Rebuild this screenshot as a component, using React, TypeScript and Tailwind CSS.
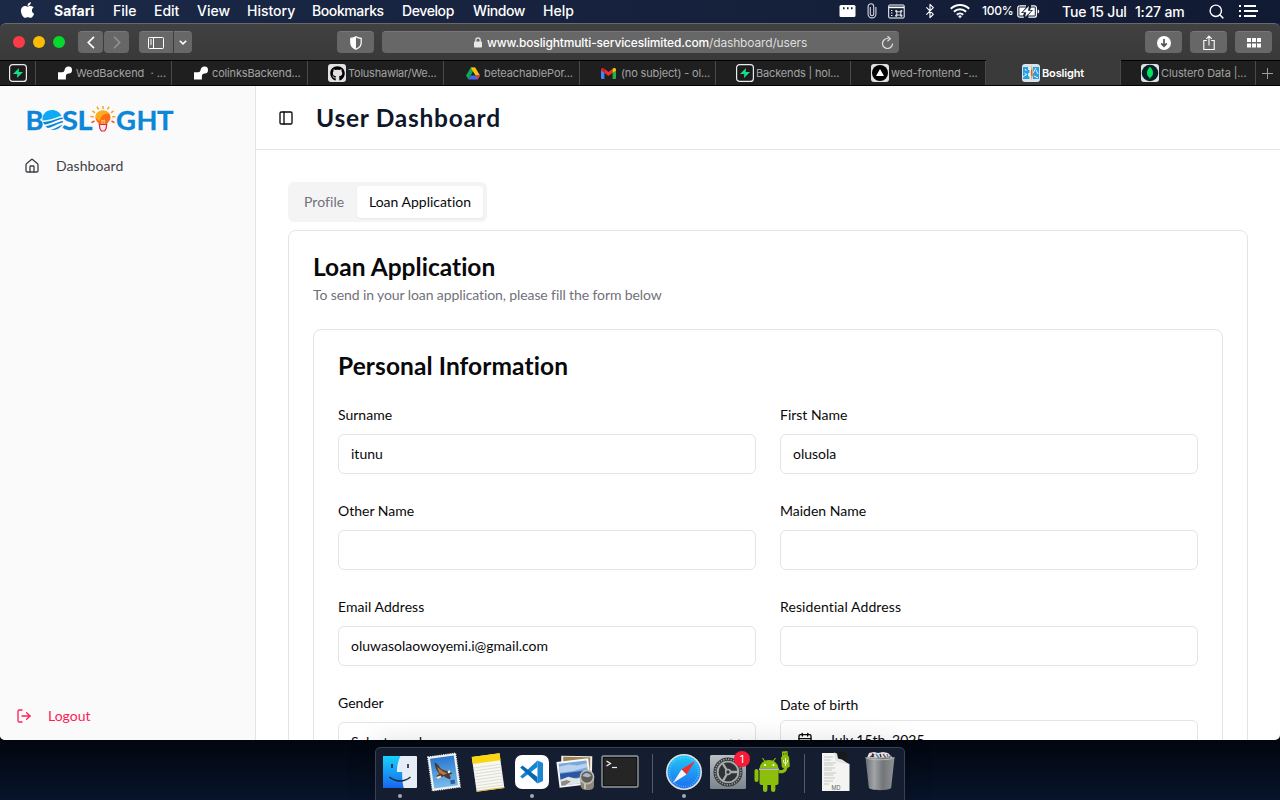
import React from "react";
import {
  Bluetooth,
  Calendar,
  ChevronDown,
  House,
  LogOut,
  PanelLeft,
  Search,
} from "lucide-react";
import { FaApple, FaGithub } from "react-icons/fa";

const menus = [
  { label: "Safari", cls: "w-[59px] font-bold" },
  { label: "File", cls: "w-[41px]" },
  { label: "Edit", cls: "w-[43px]" },
  { label: "View", cls: "w-[50px]" },
  { label: "History", cls: "w-[65px]" },
  { label: "Bookmarks", cls: "w-[90px] tracking-[-0.4px]" },
  { label: "Develop", cls: "w-[71px] tracking-[-0.4px]" },
  { label: "Window", cls: "w-[70px] tracking-[-0.4px]" },
  { label: "Help", cls: "w-[40px]" },
];

function MenuBar() {
  return (
    <div className="flex h-[23px] shrink-0 items-center bg-gradient-to-r from-[#1b2947] to-[#111a33] text-[14px] font-medium text-white">
      <div className="flex w-[54px] items-center pl-[20px]">
        <FaApple className="-mt-[3px] h-[18px] w-[15px]" />
      </div>
      {menus.map((m) => (
        <span key={m.label} className={`-mt-px shrink-0 whitespace-nowrap leading-[22px] ${m.cls}`}>
          {m.label}
        </span>
      ))}
      <div className="ml-auto flex h-full items-center pb-px">
        <svg className="mr-[11px]" width="18" height="14" viewBox="0 0 18 14">
          <rect x="1.5" y="1" width="16" height="12" rx="1.5" fill="#fff" />
          <path d="M5 3.2h1.6v2H5zM9 3.2h1.6v2H9zM13 3.2h1.6v2H13z" fill="#17223f" />
        </svg>
        <svg className="mr-[11px]" width="10" height="16" viewBox="0 0 10 16" fill="none" stroke="#d5d8df" strokeWidth="1.1">
          <path d="M3.3 4v7a1.7 1.7 0 0 0 3.4 0V3.5a2.8 2.8 0 0 0-5.6 0V11a3.9 3.9 0 0 0 7.8 0V4" />
        </svg>
        <svg className="mr-[17px]" width="17" height="15" viewBox="0 0 17 15" fill="none" stroke="#fff">
          <rect x="0.7" y="1" width="15.5" height="13" rx="1" />
          <path d="M1 3.4h15" strokeWidth="1.6" />
          <path d="M3 6.5h2M3 9h2M3 11.5h2" strokeWidth="1.2" strokeDasharray="1 .6" />
          <path d="M8.8 7.8h4v3.2h-4zM8.8 7.8H7.7V6.5h1.1zM12.8 7.8h1.1V6.5h-1.1zM8.8 11H7.7v1.3h1.1zM12.8 11h1.1v1.3h-1.1z" strokeWidth=".9" />
        </svg>
        <Bluetooth className="mr-[12px] h-[18px] w-[16px]" strokeWidth={1.7} />
        <svg className="mr-[12px]" width="20" height="16" viewBox="0 0 20 16" fill="none" stroke="#fff" strokeWidth="2">
          <path d="M.8 5.7a13 13 0 0 1 18.4 0M3.9 8.8a8.6 8.6 0 0 1 12.2 0M6.8 11.7a4.6 4.6 0 0 1 6.4 0" />
          <path d="M10 15.2l-1.9-2a2.7 2.7 0 0 1 3.8 0z" fill="#fff" stroke="none" />
        </svg>
        <span className="w-[35px] whitespace-nowrap text-[12px] tracking-[-0.25px]">100%</span>
        <svg className="mr-[22px]" width="23" height="13" viewBox="0 0 23 13">
          <path d="M3 .8h6M2.8.8A2 2 0 0 0 .8 2.8v7.4a2 2 0 0 0 2 2h4M14 .8h3.4a2 2 0 0 1 2 2v7.4a2 2 0 0 1-2 2h-6" fill="none" stroke="#fff" strokeWidth="1.2" />
          <path d="M2.4 2.4H9L4 8h3l-1 2.6H2.4zM17.8 10.6H11L16 5h-3l1-2.6h3.8z" fill="#fff" />
          <path d="M12 1L5.6 7.2h3.7L8 12l6.6-6.2H11z" fill="#fff" />
          <path d="M20.7 4.5c2 .6 2 3.4 0 4z" fill="#fff" />
        </svg>
        <span className="w-[73px] whitespace-nowrap tracking-[-0.2px]">Tue 15 Jul</span>
        <span className="w-[73px] whitespace-nowrap tracking-[-0.2px]">1:27 am</span>
        <Search className="mr-[14px] h-[17px] w-[17px]" strokeWidth={2} />
        <svg className="mr-[22px]" width="19" height="12" viewBox="0 0 19 12" stroke="#fff" strokeWidth="2" shapeRendering="crispEdges">
          <path d="M0 1h2M0 6h2M0 11h2M5 1h12M5 6h14M5 11h12" />
        </svg>
      </div>
    </div>
  );
}

const btn = "flex h-[22px] shrink-0 items-center justify-center bg-[#676767] text-white border-t border-[#777777]";

function Toolbar() {
  return (
    <div className="flex h-[37px] shrink-0 items-center rounded-t-[6px] border-t border-[#686868] bg-gradient-to-b from-[#414141] to-[#393939]">
      <div className="ml-[13px] flex gap-[8px]">
        <div className="h-[12px] w-[12px] rounded-full bg-[#fc3b47]" />
        <div className="h-[12px] w-[12px] rounded-full bg-[#fdbc04]" />
        <div className="h-[12px] w-[12px] rounded-full bg-[#05d92d]" />
      </div>
      <div className={`${btn} ml-[13px] w-[25px] rounded-[4px]`}>
        <svg width="8" height="13" viewBox="0 0 8 13" fill="none" stroke="#fff" strokeWidth="1.7">
          <path d="M7 .8L1.3 6.5 7 12.2" />
        </svg>
      </div>
      <div className={`${btn} ml-px w-[25px] rounded-[4px]`}>
        <svg width="8" height="13" viewBox="0 0 8 13" fill="none" stroke="#949494" strokeWidth="1.5">
          <path d="M1 .8l5.7 5.7L1 12.2" />
        </svg>
      </div>
      <div className={`${btn} ml-[10px] w-[34px] rounded-l-[4px]`}>
        <svg width="16" height="12" viewBox="0 0 16 12" fill="none" stroke="#fff">
          <rect x=".5" y=".5" width="15" height="11" rx=".8" />
          <path d="M5.5.5v11M2 3h2M2 5h2M2 7h2" />
        </svg>
      </div>
      <div className={`${btn} ml-px w-[18px] rounded-r-[4px]`}>
        <svg width="8" height="5" viewBox="0 0 8 5" fill="none" stroke="#fff" strokeWidth="1.6">
          <path d="M.8.8L4 3.9 7.2.8" />
        </svg>
      </div>
      <div className={`${btn} ml-[145px] w-[37px] rounded-[4px]`}>
        <svg width="12" height="14" viewBox="0 0 12 14">
          <path d="M6 .7c1.4 1 3.2 1.6 5.2 1.7v4.4c0 3-2 5.2-5.2 6.5C2.8 12 .8 9.8.8 6.8V2.4C2.8 2.3 4.6 1.7 6 .7z" fill="none" stroke="#fff" strokeWidth="1.2" />
          <path d="M6 .7v12.6C2.8 12 .8 9.8.8 6.8V2.4C2.8 2.3 4.6 1.7 6 .7z" fill="#fff" />
        </svg>
      </div>
      <div className={`${btn} ml-[8px] w-[517px] rounded-[4px] text-[12px]`}>
        <div className="flex w-full items-center">
          <svg className="ml-[92px] mr-[5px]" width="8" height="11" viewBox="0 0 8 11">
            <rect x="0" y="4.5" width="8" height="6" rx=".8" fill="#e8e8e8" />
            <path d="M1.8 5V3a2.2 2.2 0 0 1 4.4 0v2" fill="none" stroke="#e8e8e8" strokeWidth="1.2" />
          </svg>
          <span className="w-[390px] whitespace-nowrap font-medium leading-[20px] tracking-[-0.15px]">
            www.boslightmulti-serviceslimited.com<span className="font-normal text-[#dedede]">/dashboard/users</span>
          </span>
          <svg className="ml-auto mr-[5px]" width="13" height="14" viewBox="0 0 13 14" fill="none" stroke="#e0e0e0" strokeWidth="1.2">
            <path d="M11.5 7.5a5 5 0 1 1-5-5h1" />
            <path d="M6.5.2l2.8 2.5-2.8 2.5" />
          </svg>
        </div>
      </div>
      <div className={`${btn} ml-auto w-[37px] rounded-[4px]`}>
        <svg width="14" height="14" viewBox="0 0 14 14">
          <circle cx="7" cy="7" r="7" fill="#fff" />
          <path d="M7 3v7M4.2 7.4L7 10.2l2.8-2.8" stroke="#555" strokeWidth="1.7" fill="none" />
        </svg>
      </div>
      <div className={`${btn} ml-[8px] w-[37px] rounded-[4px]`}>
        <svg width="12" height="16" viewBox="0 0 12 16" fill="none" stroke="#fff" strokeWidth="1.1">
          <path d="M3.8 5.5H.8v9h10.4v-9h-3M6 10.5V1.2M3.3 3.8L6 1.1l2.7 2.7" />
        </svg>
      </div>
      <div className={`${btn} ml-[8px] mr-[8px] w-[37px] rounded-[4px]`}>
        <svg width="14" height="10" viewBox="0 0 14 10" fill="#fff">
          <path d="M0 0h4v4H0zM5 0h4v4H5zM10 0h4v4h-4zM0 5.5h4v4H0zM5 5.5h4v4H5zM10 5.5h4v4h-4z" />
        </svg>
      </div>
    </div>
  );
}

function Supabase() {
  return (
    <svg width="18" height="18" viewBox="0 0 18 18">
      <rect x=".6" y=".6" width="16.8" height="16.8" rx="3" fill="#1c1c1c" stroke="#ececec" strokeWidth="1.2" />
      <path d="M10 4L4 10h4.3l-.3 4L14 8H9.7z" fill="#14e08a" />
    </svg>
  );
}
function Render() {
  return (
    <svg width="14" height="14" viewBox="0 0 14 14" fill="#fff">
      <path d="M0 6.2h4.2c1.4 0 1.8-.6 2.2-1.7C7 2 8.2.5 10.3.5a3.5 3.5 0 0 1 .4 7c-1.8.1-2.7.8-2.8 2.6v3.4H0z" />
    </svg>
  );
}
function Drive() {
  return (
    <svg width="14" height="13" viewBox="0 0 14 13">
      <path d="M4.8.5h4.4l-2.2 4L2.4 12.5 0 8.6z" fill="#11a84f" />
      <path d="M4.8.5h4.4L14 8.6H9.5z" fill="#ffc107" />
      <path d="M4.7 8.6H14l-2.4 3.9H2.4z" fill="#4169f0" />
      <path d="M9.6 8.6H14l-2.4 3.9z" fill="#ef3a32" />
    </svg>
  );
}
function Gmail() {
  return (
    <svg width="15" height="11" viewBox="0 0 15 11">
      <path d="M0 1.5l3.4 2.6V11H1a1 1 0 0 1-1-1z" fill="#4285f4" />
      <path d="M15 1.5l-3.4 2.6V11H14a1 1 0 0 0 1-1z" fill="#22b24c" />
      <path d="M3.4.7l4.1 3.2 4.1-3.2v4.1L7.5 8 3.4 4.8z" fill="#ee3124" />
      <path d="M0 1.8C0 .2 1.7-.5 3.4.7v4.1L0 2.4z" fill="#d92020" />
      <path d="M15 1.8c0-1.6-1.7-2.3-3.4-1.1v4.1L15 2.4z" fill="#fbc60a" />
    </svg>
  );
}
function Vercel() {
  return (
    <svg width="18" height="18" viewBox="0 0 18 18">
      <rect width="18" height="18" rx="3" fill="#e2e2e2" />
      <circle cx="9" cy="9" r="8" fill="#000" />
      <path d="M9 5l4 7H5z" fill="#fff" />
    </svg>
  );
}
function BosIcon() {
  return (
    <svg width="18" height="18" viewBox="0 0 18 18">
      <rect width="18" height="18" rx="3" fill="#dce4ea" />
      <path d="M1 3h5v3h2v3H6v3l2 1v2H1zM11 3h6v12h-6z" fill="#25a0e6" />
      <path d="M3 5l1.5 2M2.5 9l2.5 2M1 13l4-3M14 4l-3 5M14 6l2 4M12 12l4 2M8 3v12" stroke="#eef6fb" strokeWidth="1" />
      <path d="M9.500 1l1.300 5-.4 8-1 2-.8-6z" fill="#f4a52c" />
      <path d="M9.500 6l.5 6" stroke="#e5502e" />
    </svg>
  );
}
function Mongo() {
  return (
    <svg width="18" height="18" viewBox="0 0 18 18">
      <rect width="18" height="18" rx="3" fill="#dfe3e3" />
      <circle cx="9" cy="9" r="8.3" fill="#06202c" />
      <path d="M9 2.800c2 2 3 4 3 6.200 0 2-1 3.600-2.600 4.700L9 15.300l-.4-1.600C7 12.600 6 11 6 9c0-2.200 1-4.200 3-6.200z" fill="#00e55a" />
    </svg>
  );
}

const tabs = [
  { name: "WedBackend  · ...", cls: "w-[136px] pl-[22px] gap-[4px]", icon: <Render />, text: "tracking-[-0.02px]" },
  { name: "colinksBackend...", cls: "w-[136px] pl-[22px] gap-[4px]", icon: <Render />, text: "tracking-[-0.15px]" },
  {
    name: "Tolushawlar/We...",
    cls: "w-[136px] pl-[20px] gap-[2px]",
    icon: (
      <span className="flex h-[18px] w-[18px] items-center justify-center rounded-[3px] bg-[#e2e2e2] text-black">
        <FaGithub className="h-[15px] w-[15px]" />
      </span>
    ),
    text: "tracking-[-0.23px]",
  },
  { name: "beteachablePor...", cls: "w-[136px] pl-[22px] gap-[4px]", icon: <Drive />, text: "tracking-[-0.1px]" },
  { name: "(no subject) - ol...", cls: "w-[136px] pl-[21px] gap-[5px]", icon: <Gmail />, text: "tracking-[-0.16px]" },
  { name: "Backends | hol...", cls: "w-[135px] pl-[20px] gap-[2px]", icon: <Supabase />, text: "tracking-[-0.16px]" },
  { name: "wed-frontend -...", cls: "w-[135px] pl-[20px] gap-[2px]", icon: <Vercel />, text: "tracking-[-0.14px]" },
  { name: "Boslight", cls: "w-[135px] pl-[36px] gap-[2px]", icon: <BosIcon />, text: "tracking-[-0.15px]", active: true },
  { name: "Cluster0 Data |...", cls: "w-[135px] pl-[20px] gap-[2px]", icon: <Mongo />, text: "tracking-[-0.1px]" },
];

function TabStrip() {
  return (
    <div className="flex h-[26px] shrink-0 border-b border-t border-black bg-[#1f1f1f] text-[11px]">
      <div className="flex w-[36px] shrink-0 items-center border-r border-[#4a4a4a] pl-[9px]">
        <Supabase />
      </div>
      {tabs.map((t) => (
        <div
          key={t.name}
          className={`flex shrink-0 items-center overflow-hidden border-r border-[#4a4a4a] ${t.cls} ${t.active ? "-mt-px bg-[#3a3a3a] pt-px font-semibold text-white" : "text-[#a3a3a3]"}`}
        >
          <span className="shrink-0">{t.icon}</span>
          <span className={`whitespace-pre ${t.text}`}>{t.name}</span>
        </div>
      ))}
      <div className="flex flex-1 items-center justify-center pr-px">
        <svg width="11" height="11" viewBox="0 0 11 11" stroke="#9b9b9b">
          <path d="M5.5 0v11M0 5.5h11" />
        </svg>
      </div>
    </div>
  );
}

function Logo() {
  return (
    <svg className="overflow-visible" width="150" height="30" viewBox="0 0 150 30">
      <g fill="#0b86d8" fontFamily="Lato, sans-serif" fontWeight="700" fontSize="27" stroke="#0b86d8" strokeWidth=".3">
        <text x="-.5" y="24.5" textLength="18" lengthAdjust="spacingAndGlyphs">B</text>
        <text x="36" y="24.5" textLength="16" lengthAdjust="spacingAndGlyphs">S</text>
        <text x="51.5" y="24.5" textLength="15" lengthAdjust="spacingAndGlyphs">L</text>
        <text x="90" y="24.500" textLength="20" lengthAdjust="spacingAndGlyphs">G</text>
        <text x="110.500" y="24.500" textLength="21" lengthAdjust="spacingAndGlyphs">H</text>
        <text x="131" y="24.500" textLength="16.500" lengthAdjust="spacingAndGlyphs">T</text>
      </g>
      <path d="M16.500 15.500C16 9 20.500 5 26 5c4.500 0 8 2.500 9.500 6C31 11.500 25 15.500 16.500 15.500z" fill="#10a9f4" />
      <path d="M17 17c8 0 13.500-4 19.500-4.500l.3 1.500C31 14.500 25 19 18.300 19.500zM19.500 21c7-.5 12-4.500 17.500-5l-.2 1.500C31 18.500 27 22.500 21.500 23zM24 24.800c5-.5 8.500-4 12.500-5-2 3-5.300 5.200-9 5.200z" fill="#0b86d8" />
      <g stroke="#f9a51a" strokeWidth="1.500">
        <path d="M77 4V1M72.500 4.500l-1.500-2.800M81.500 4.500L83 1.700M69 7.800l-2.600-2M85 7.800l2.600-2M67.800 12l-3.300-.5M86.200 12l3.300-.5" />
        <path d="M68.500 16l-3 1.700M85.500 16l3 1.700" stroke="#ee4b2b" />
      </g>
      <path d="M77 5.500c4.400 0 7.500 3.100 7.500 7 0 3.500-3 4.700-3.800 7.500h-7.400c-.8-2.800-3.800-4-3.800-7.500 0-3.900 3.100-7 7.500-7z" fill="#fb6d13" />
      <path d="M77 5.500c3 0 5 1.500 6 3.500-4-1-8 1-9.500 7C71 14.500 69.500 13 69.500 11c.5-3.300 4-5.500 7.500-5.500z" fill="#fcbb20" opacity=".8" />
      <path d="M75 15l2 1 2-1M76 20v-4.500M78.200 20v-4.500" stroke="#ffe2a5" strokeWidth=".8" fill="none" />
      <path d="M73.300 19.500h7.400l-.6 4-1.500 2.500h-3.200L73.900 23.500z" fill="#f9e9e9" stroke="#e2263c" strokeWidth="1.200" />
    </svg>
  );
}

function Field({ label, value, text }: { label: string; value?: string; text?: string }) {
  return (
    <div>
      <div className={`h-6 text-sm leading-[26px] ${text ?? ""}`}>{label}</div>
      <div className="mt-2 flex h-10 items-center rounded-md border border-[#e4e4e7] px-3 text-sm">{value}</div>
    </div>
  );
}

function Page() {
  return (
    <div className="flex min-h-0 flex-1 overflow-hidden rounded-b-[5px] bg-white font-['Lato',sans-serif] text-[#09090b] [font-variant-ligatures:none]">
      <aside className="flex w-64 shrink-0 flex-col border-r border-[#e4e4e7] bg-[#fafafa] text-sm">
        <div className="h-[49px] pl-[26px] pt-[19px]">
          <Logo />
        </div>
        <div className="mt-[21px] flex items-center gap-4 pl-6 text-[#3f3f46]">
          <House className="h-4 w-4" />
          <span className="tracking-[0.08px]">Dashboard</span>
        </div>
        <div className="mb-[14px] mt-auto flex items-center gap-4 pl-4 text-[#ff2056]">
          <LogOut className="h-4 w-4" />
          <span>Logout</span>
        </div>
      </aside>
      <main className="flex flex-1 flex-col overflow-hidden">
        <header className="flex h-16 shrink-0 items-center border-b border-[#e4e4e7] pl-[22px]">
          <PanelLeft className="h-4 w-4" />
          <h1 className="ml-[22px] text-[24.5px] font-bold leading-8 tracking-[0.73px] text-[#0f172a]">User Dashboard</h1>
        </header>
        <div className="flex flex-col items-start px-8 pt-8">
          <div className="flex h-10 shrink-0 items-center rounded-md bg-[#f4f4f5] p-1 text-sm">
            <span className="w-[65px] px-3 py-1.5 tracking-[0.05px] text-[#71717a] [font-variant-ligatures:normal]">Profile</span>
            <span className="w-[126px] whitespace-nowrap rounded-sm bg-white px-3 py-1.5 shadow-[0_1px_2px_rgba(0,0,0,0.06)]">Loan Application</span>
          </div>
          <section className="mt-2 w-full rounded-lg border border-[#e4e4e7] p-6">
            <h2 className="text-[24.5px] font-bold leading-[24px] tracking-[0.02px]">Loan Application</h2>
            <p className="mt-1.5 text-sm tracking-[-0.1px] text-[#71717a]">To send in your loan application, please fill the form below</p>
            <div className="mt-6 rounded-lg border border-[#e4e4e7] p-6">
              <h3 className="text-[24.5px] font-bold leading-[24px] tracking-[0.09px]">Personal Information</h3>
              <div className="mt-6 grid grid-cols-2 gap-6">
                <Field label="Surname" value="itunu" />
                <Field label="First Name" value="olusola" />
                <Field label="Other Name" />
                <Field label="Maiden Name" />
                <Field label="Email Address" value="oluwasolaowoyemi.i@gmail.com" text="tracking-[0.07px]" />
                <Field label="Residential Address" text="tracking-[0.1px]" />
                <div>
                  <div className="h-6 text-sm leading-[26px]">Gender</div>
                  <div className="mt-2 flex h-10 items-center justify-between rounded-md border border-[#e4e4e7] px-3 text-sm">
                    <span>Select gender</span>
                    <ChevronDown className="h-4 w-4 opacity-50" />
                  </div>
                </div>
                <div className="pt-2">
                  <div className="text-sm leading-[14px]">Date of birth</div>
                  <div className="mt-2 flex h-10 items-center gap-4 rounded-md border border-[#e4e4e7] px-4 text-sm">
                    <Calendar className="h-4 w-4" />
                    <span>July 15th, 2025</span>
                  </div>
                </div>
              </div>
            </div>
          </section>
        </div>
      </main>
    </div>
  );
}

function DockIcon({ children, running }: { children: React.ReactNode; running?: boolean }) {
  return (
    <svg className="shrink-0" width="44" height="52" viewBox="0 0 44 52">
      {children}
      {running && <circle cx="22" cy="48" r="2" fill="#a4a8b4" />}
    </svg>
  );
}

function Dock() {
  return (
    <div className="absolute left-[375px] top-[747px] flex h-[60px] w-[530px] rounded-t-[5px] border border-[#3a4153] bg-[#151d31] pl-[2px] shadow-[0_0_30px_rgba(0,0,0,0.2)]">
      <svg className="absolute" width="0" height="0">
        <defs>
          <linearGradient id="finder" x2="0" y2="1"><stop stopColor="#18d1fb" /><stop offset="1" stopColor="#1766ef" /></linearGradient>
          <linearGradient id="safari" x2="0" y2="1"><stop stopColor="#20c9f7" /><stop offset="1" stopColor="#1c6df0" /></linearGradient>
          <linearGradient id="metal" x2="0" y2="1"><stop stopColor="#b9c0c4" /><stop offset="1" stopColor="#7c858d" /></linearGradient>
          <linearGradient id="bin"><stop stopColor="#6b6e70" /><stop offset=".3" stopColor="#a2a5a7" /><stop offset=".6" stopColor="#737678" /><stop offset="1" stopColor="#909395" /></linearGradient>
          <linearGradient id="sky" x2="0" y2="1"><stop stopColor="#2a78ce" /><stop offset="1" stopColor="#79bbed" /></linearGradient>
        </defs>
      </svg>
      <DockIcon running>
        <rect x="5" y="8" width="34" height="32" rx="1" fill="#e7edf6" />
        <path d="M5 8h17.500c-2.500 5-3.500 10-3.600 16h5.300c-.2 6 .3 11 1.500 16H5z" fill="url(#finder)" />
        <path d="M14 16v4M30 16v4" stroke="#17253b" strokeWidth="1.6" />
        <path d="M11.5 29c6 5.300 15 5.300 21 0" fill="none" stroke="#17253b" strokeWidth="1.5" />
      </DockIcon>
      <DockIcon>
        <g transform="rotate(-8 22 24)">
          <rect x="8" y="7" width="28" height="34" fill="#f1f2f2" stroke="#f1f2f2" strokeWidth="1.4" strokeDasharray="1.2 1" />
          <rect x="10" y="9" width="24" height="30" fill="url(#sky)" />
          <path d="M14 13c2.500 1 4 5 6 8l4 2c3 .5 5 2 6 4l-3 .5c.8 2 1 3.500.3 4.500-3-1-4-2-6-4l-4 1.500-4-.5 1-2.500 3-1c-2.500-4-4-8-3.300-12.500z" fill="#4c3b31" />
          <path d="M16 18l5 5 4 3-4 1-4-3z" fill="#b87735" />
          <circle cx="27" cy="24.5" r="1.4" fill="#f5f2e6" />
          <path d="M13 28l5-1 1 2-4 1z" fill="#ece2c8" />
          <rect x="27" y="33" width="4.5" height="4" fill="#2d5f9e" />
        </g>
      </DockIcon>
      <DockIcon>
        <g transform="rotate(-8 22 24)">
          <rect x="8" y="7" width="28" height="35" fill="#f8f8f3" />
          <rect x="8" y="7" width="28" height="7" fill="#fbd510" />
          <path d="M8 18h28M8 21h28M8 24h28M8 27h28M8 30h28M8 33h28M8 36h28M8 39h28" stroke="#d2d3ce" strokeWidth=".7" />
          <path d="M8 41.5h28" stroke="#d8b62d" />
        </g>
      </DockIcon>
      <DockIcon running>
        <rect x="5" y="7" width="34" height="34" rx="7" fill="#fff" />
        <path d="M27.500 12.500v6.500L12.500 30.500l-2.300-2.100z" fill="#1685d3" />
        <path d="M27.500 35.500V29L12.500 17.500l-2.300 2.100z" fill="#0869b5" />
        <path d="M27.500 12.500l5.500 2.600v17.800l-5.500 2.600z" fill="#1b86d2" />
      </DockIcon>
      <DockIcon>
        <g transform="rotate(1 22 24)"><rect x="7" y="8" width="31" height="24" fill="#efefe9" /><rect x="9" y="9" width="27" height="20" fill="#a18254" /></g>
        <g transform="rotate(-7 20 26)">
          <rect x="4" y="12" width="32" height="26" fill="#f6f7f6" />
          <rect x="6" y="14" width="28" height="22" fill="#79a8dc" />
          <path d="M6 17l10-1 8 2 10-1v4l-14 2-14 0z" fill="#b9d2ef" />
          <path d="M6 24h28v6H6z" fill="#2c56a0" />
          <path d="M6 30l8-2 8 3 12-2v7H6z" fill="#dfe4e4" />
          <path d="M6 32l6-1 4 2-6 3H6z" fill="#8f8a83" />
        </g>
        <path d="M26.500 30h13.500v7c0 4-2 5-6.500 5s-6.500-1-7-5z" fill="#8d867b" />
        <path d="M30 36h2v5h-2z" fill="#c5bfb4" />
        <circle cx="33" cy="29" r="6.600" fill="#635c50" stroke="#babbb8" strokeWidth="1.600" />
        <path d="M28.500 28c2-4 6-4 9 0-2 0-3 2-5 1-2 0-3-1-4-1z" fill="#a5b9cf" />
      </DockIcon>
      <DockIcon>
        <rect x="4" y="8" width="36" height="31" rx="1.5" fill="#242524" stroke="#8f9899" strokeWidth="1.4" />
        <rect x="5.5" y="9.5" width="33" height="28" fill="none" stroke="#121414" />
        <path d="M8.500 13l4 2.500-4 2.500" fill="none" stroke="#eee" strokeWidth="1.3" />
        <path d="M14 19.5h5" stroke="#eee" strokeWidth="1.2" />
      </DockIcon>
      <div className="flex w-[20px] shrink-0 justify-center pt-[6px]"><div className="h-[39px] w-px bg-[#525a6b]" /></div>
      <DockIcon running>
        <circle cx="22" cy="24" r="18" fill="#dfe2e3" />
        <circle cx="22" cy="24" r="16.4" fill="url(#safari)" />
        <circle cx="22" cy="24" r="14.6" fill="none" stroke="#8adcf8" strokeWidth="1.6" strokeDasharray=".5 1.8" />
        <path d="M33 13L24.500 26.500 19.500 21.500z" fill="#f12e2d" />
        <path d="M11 35l8.500-13.500 5 5z" fill="#f5f5f5" />
      </DockIcon>
      <DockIcon>
        <rect x="4" y="7" width="36" height="34" rx="1.5" fill="url(#metal)" />
        <circle cx="22" cy="24" r="14.5" fill="#303335" />
        <circle cx="22" cy="24" r="12.8" fill="none" stroke="#8f9395" strokeWidth="1.7" strokeDasharray="1.4 1.1" />
        <circle cx="22" cy="24" r="10.4" fill="#303335" stroke="#a7aaac" strokeWidth="1.9" />
        <path d="M22 24l-5-8M22 24h10M22 24l-5 9" stroke="#a9acad" strokeWidth="2.3" />
        <circle cx="22" cy="24" r="2.4" fill="#303335" stroke="#a9acad" strokeWidth="1.5" />
        <circle cx="36" cy="11" r="8" fill="#f71b35" />
        <text x="36" y="14.7" textAnchor="middle" fill="#fff" fontSize="10.5" fontFamily="Inter, sans-serif">1</text>
      </DockIcon>
      <DockIcon>
        <g fill="#8dbe0c">
          <path d="M9.500 20.500a9.500 8.500 0 0 1 19 0z" />
          <path d="M9.500 22h19v13a2 2 0 0 1-2 2h-15a2 2 0 0 1-2-2z" />
          <rect x="4.500" y="21" width="4" height="13" rx="2" />
          <rect x="13" y="32" width="4.400" height="12" rx="2.200" />
          <rect x="21" y="32" width="4.400" height="12" rx="2.200" />
          <path d="M28.500 22h3c2 0 2.500-1.500 2.500-4h3.500c0 5-2.500 7.300-6 7.300h-3z" />
          <path d="M31 9l8-.7.8 10c-.3 2-7.500 2.500-8 .7z" />
          <path d="M32 3.500l5.500-.5.5 6-6 .5z" />
        </g>
        <path d="M12.500 10l2.700 4M25.500 10l-2.700 4" stroke="#8dbe0c" strokeWidth="1.1" />
        <path d="M9 21.200h20" stroke="#d8ddd0" strokeWidth="1.3" />
        <circle cx="15" cy="17" r="1" fill="#fff" /><circle cx="23.5" cy="17" r="1" fill="#fff" />
        <path d="M33.700 5v2M36 4.800v2" stroke="#47620c" strokeWidth="1" />
        <path d="M35.500 10v8M33.500 12v2l2 2 2-2v-2" fill="none" stroke="#eaf5c5" strokeWidth="1" />
      </DockIcon>
      <div className="flex w-[20px] shrink-0 justify-center pt-[6px]"><div className="h-[39px] w-px bg-[#525a6b]" /></div>
      <DockIcon>
        <path d="M8 5h17l3 9 7.500 2v27H8z" fill="#f4f4f2" />
        <path d="M21 4h10l2 2v9h-4l-7-4z" fill="#17191c" />
        <path d="M20 4.500l3 1 1 5 4 1 7.500 5-8-1.500-6-2z" fill="#e2e3e3" />
        <path d="M10 9h9M10 12h7M10 15h12M10 17h9M10 20h11M10 22h8M10 25h12M10 27h9M10 30h11M10 33h9M10 36h5" stroke="#bbb" strokeWidth=".8" />
        <text x="22" y="41.5" textAnchor="middle" fill="#666" fontSize="5.5" fontFamily="Inter, sans-serif">MD</text>
      </DockIcon>
      <DockIcon>
        <path d="M9 10l2-5 5-1 4 1 5-1 5 1 5 5z" fill="#e2e5e6" />
        <path d="M12 9l3-2 1 2M25 6l3 4M33 7l-2 3" stroke="#a44237" strokeWidth="1.3" />
        <path d="M18 6l3 4M29 6l1 3" stroke="#3b8cc0" strokeWidth="1.5" />
        <path d="M22 6l1 3M14 6l2 1" stroke="#2c3035" strokeWidth="1.5" />
        <path d="M7.500 9.500h29l-3.300 30c-.3 3.500-22 3.500-22.400 0z" fill="url(#bin)" />
        <path d="M7.500 9.500c2 3 27 3 29 0" fill="none" stroke="#b5b9ba" />
      </DockIcon>
    </div>
  );
}

export default function App() {
  return (
    <div className="relative flex h-[800px] w-[1280px] flex-col overflow-hidden bg-[linear-gradient(to_bottom,#1a2744_0,#1a2744_40px,#02060f_740px,#07142a_800px)] font-['Inter',sans-serif]">
      <MenuBar />
      <div className="flex h-[717px] shrink-0 flex-col">
        <Toolbar />
        <TabStrip />
        <Page />
      </div>
      <Dock />
    </div>
  );
}
